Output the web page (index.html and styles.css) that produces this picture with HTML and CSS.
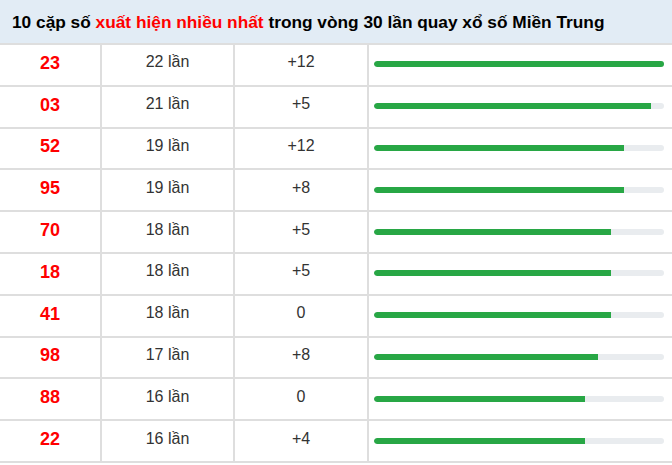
FILE: index.html
```html
<!DOCTYPE html>
<html lang="vi">
<head>
<meta charset="utf-8">
<link rel="stylesheet" href="styles.css">
</head>
<body>
<div class="box">
  <div class="head">10 cặp số <span class="red">xuất hiện nhiều nhất</span> trong vòng 30 lần quay xổ số Miền Trung</div>
  <div class="row"><div class="c num">23</div><div class="c">22 lần</div><div class="c">+12</div><div class="c bar"><div class="track"><div class="fill" style="width:100%"></div></div></div></div>
  <div class="row"><div class="c num">03</div><div class="c">21 lần</div><div class="c">+5</div><div class="c bar"><div class="track"><div class="fill" style="width:95.45%"></div></div></div></div>
  <div class="row"><div class="c num">52</div><div class="c">19 lần</div><div class="c">+12</div><div class="c bar"><div class="track"><div class="fill" style="width:86.36%"></div></div></div></div>
  <div class="row"><div class="c num">95</div><div class="c">19 lần</div><div class="c">+8</div><div class="c bar"><div class="track"><div class="fill" style="width:86.36%"></div></div></div></div>
  <div class="row"><div class="c num">70</div><div class="c">18 lần</div><div class="c">+5</div><div class="c bar"><div class="track"><div class="fill" style="width:81.82%"></div></div></div></div>
  <div class="row"><div class="c num">18</div><div class="c">18 lần</div><div class="c">+5</div><div class="c bar"><div class="track"><div class="fill" style="width:81.82%"></div></div></div></div>
  <div class="row"><div class="c num">41</div><div class="c">18 lần</div><div class="c">0</div><div class="c bar"><div class="track"><div class="fill" style="width:81.82%"></div></div></div></div>
  <div class="row"><div class="c num">98</div><div class="c">17 lần</div><div class="c">+8</div><div class="c bar"><div class="track"><div class="fill" style="width:77.27%"></div></div></div></div>
  <div class="row"><div class="c num">88</div><div class="c">16 lần</div><div class="c">0</div><div class="c bar"><div class="track"><div class="fill" style="width:72.73%"></div></div></div></div>
  <div class="row"><div class="c num">22</div><div class="c">16 lần</div><div class="c">+4</div><div class="c bar"><div class="track"><div class="fill" style="width:72.73%"></div></div></div></div>
</div>
</body>
</html>
```
FILE: styles.css
```css
html, body {
  margin: 0;
  padding: 0;
  background: #fff;
}
body {
  font-family: "Liberation Sans", Arial, sans-serif;
  color: #333;
}
.box {
  width: 672px;
}
.head {
  box-sizing: border-box;
  background: #e2ecf5;
  border-bottom: 2px solid #dedede;
  height: 45px;
  padding: 12px 0 0 12px;
  font-size: 17.3px;
  font-weight: bold;
  color: #000;
  white-space: nowrap;
}
.red {
  color: #f00;
}
.row {
  display: grid;
  grid-template-columns: 102px 133px 134px 1fr;
  height: 41.8px;
  box-sizing: border-box;
  border-bottom: 2px solid #dedede;
}
.c {
  display: flex;
  align-items: center;
  justify-content: center;
  border-right: 2px solid #dedede;
  font-size: 16px;
  padding-bottom: 5px;
  box-sizing: border-box;
}
.num {
  color: #f00;
  font-weight: bold;
  font-size: 18px;
  padding-bottom: 3px;
}
.bar {
  border-right: none;
  justify-content: flex-start;
  padding: 0 8px 1px 5px;
}
.track {
  width: 100%;
  height: 6px;
  border-radius: 3px;
  background: #e9ecef;
  overflow: hidden;
}
.fill {
  height: 100%;
  background: #28a745;
  border-radius: 3px 0 0 3px;
}
```
